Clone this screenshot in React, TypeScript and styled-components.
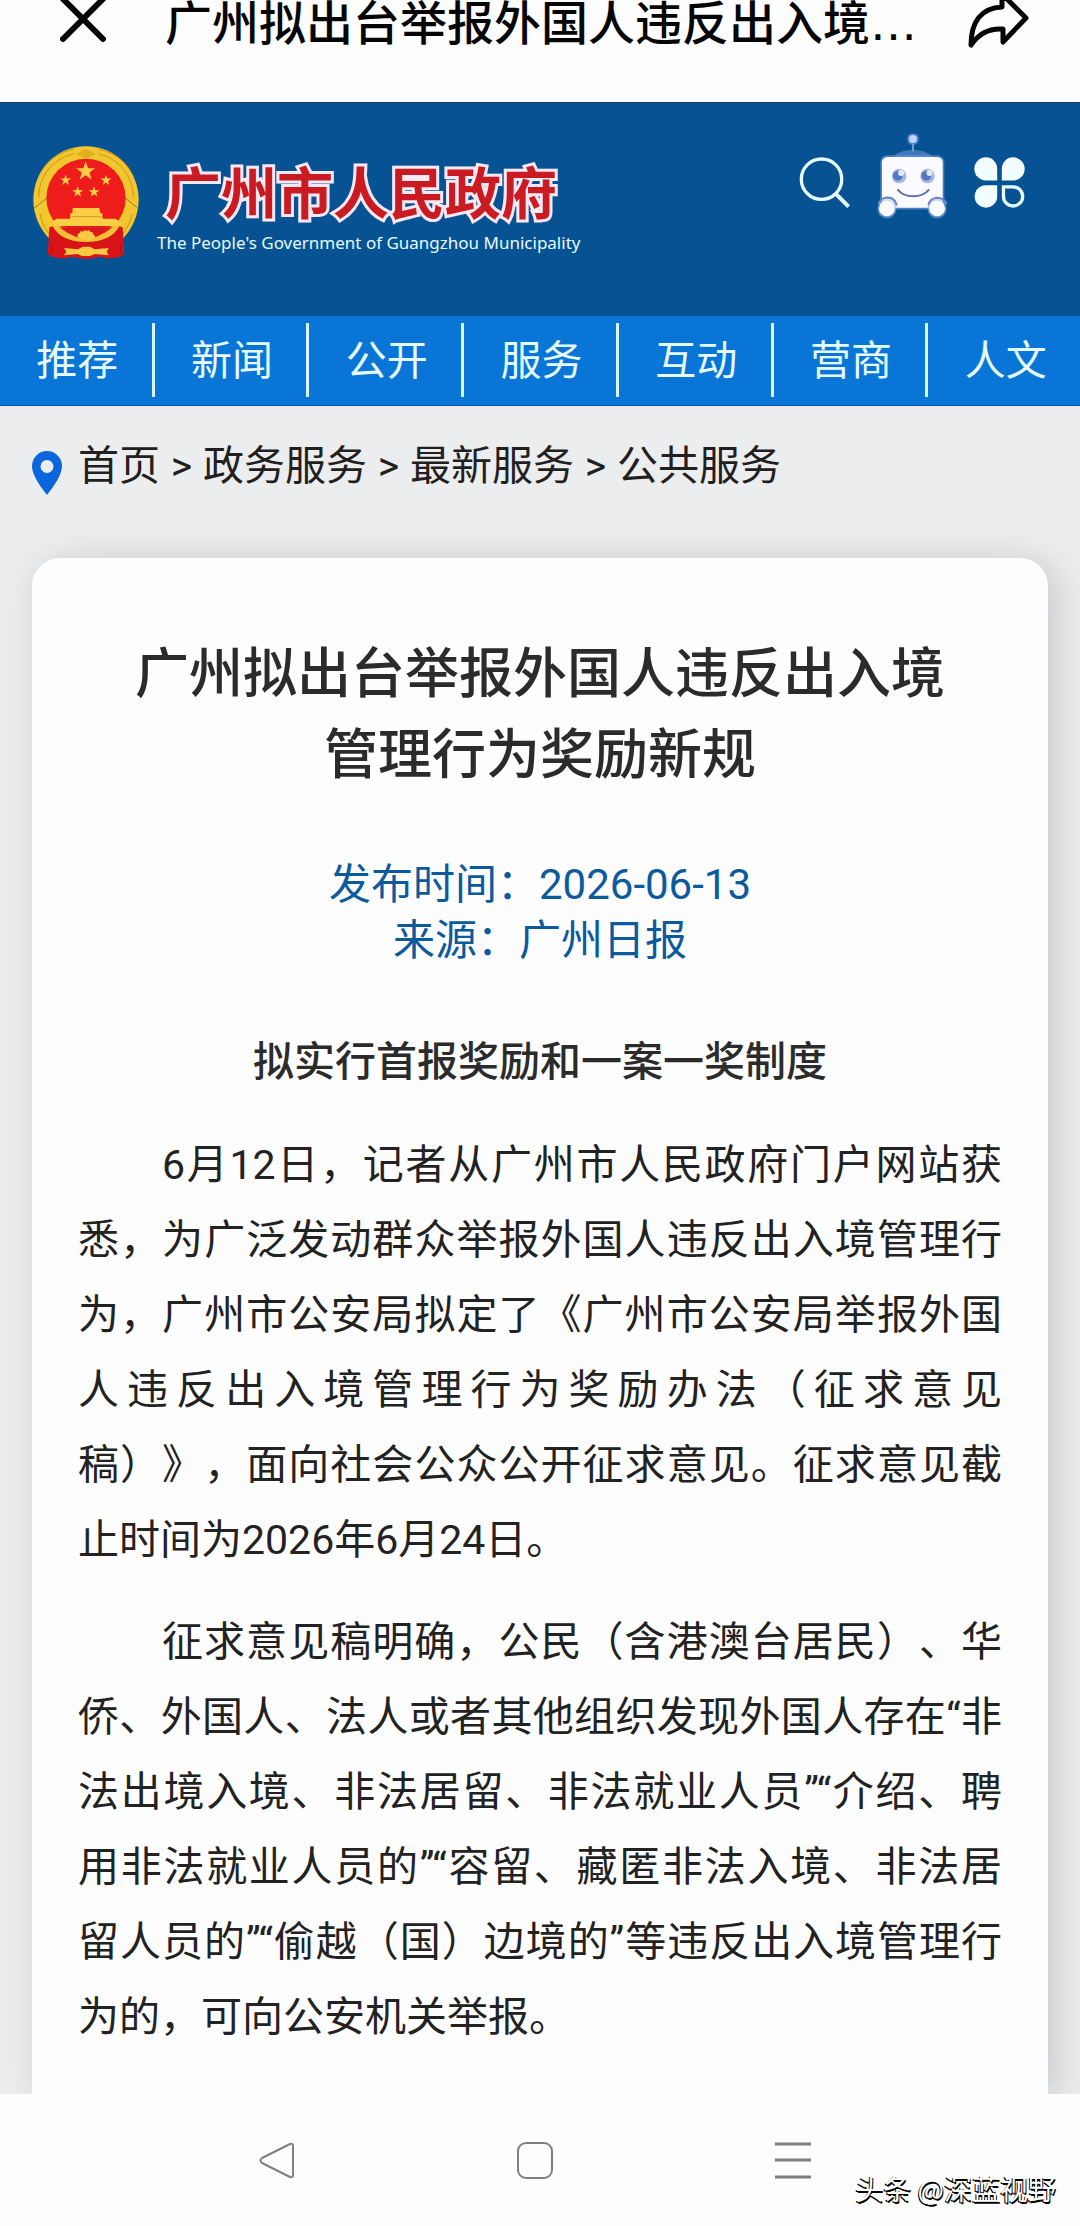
import styled, { createGlobalStyle } from 'styled-components';

const GlobalStyle = createGlobalStyle`
  * {
    box-sizing: border-box;
  }

  body {
    margin: 0;
    background: #fdfdfd;
    font-family: Roboto, 'Noto Sans CJK SC', sans-serif;
    text-spacing-trim: space-all;
  }

  h1,
  h2,
  p {
    margin: 0;
  }

  a {
    color: inherit;
    text-decoration: none;
  }

  svg {
    display: block;
  }
`;

const Page = styled.div`
  display: flex;
  flex-direction: column;
  min-height: 100vh;
`;

const IconButton = styled.button`
  flex: none;
  padding: 0;
  border: 0;
  background: none;
`;

const TopBar = styled.div`
  display: flex;
  align-items: flex-start;
  padding: 0 51px 54px 60px;
`;

const TopTitle = styled.div`
  flex: 1;
  margin-left: 58px;
  color: #060606;
  font-size: 47px;
  font-weight: 500;
  line-height: 48px;
  white-space: nowrap;
`;

const Ellipsis = styled.span`
  font-family: 'DejaVu Sans', sans-serif;
  font-weight: 400;
`;

const SiteHeader = styled.header`
  display: flex;
  align-items: flex-start;
  justify-content: space-between;
  height: 214px;
  padding: 0 55px 0 33px;
  border-top: 1px solid #0b3d66;
  background: #075293;
`;

const Brand = styled.a`
  display: flex;
  gap: 18px;
  padding-top: 43px;
`;

const BrandText = styled.span`
  display: flex;
  flex-direction: column;
  padding-top: 19px;
`;

const BrandName = styled.span`
  padding-left: 8px;
  color: #cb1b22;
  font-size: 56px;
  font-weight: 700;
  line-height: 60px;
  -webkit-text-stroke: 6px #f6e9f4;
  paint-order: stroke fill;
`;

const BrandEnglish = styled.span`
  color: #e4fbff;
  font-family: 'Noto Sans', sans-serif;
  font-size: 17px;
  line-height: 36px;
`;

const HeaderTools = styled.div`
  display: flex;
  align-items: center;
  gap: 27px;
  padding-top: 29px;
`;

const NavBar = styled.nav`
  display: flex;
  padding: 7px 0 8px;
  border-bottom: 1px solid #0a559f;
  background: #0976d7;
`;

const NavLink = styled.a`
  flex: 1;
  padding: 2px 0 0 3px;
  border-right: 3px solid #d8f7ff;
  color: #e6fcff;
  font-size: 41px;
  line-height: 72px;
  text-align: center;

  &:last-child {
    border-right: 0;
  }
`;

const Content = styled.main`
  display: flex;
  flex: 1;
  flex-direction: column;
  padding: 0 32px;
  overflow: hidden;
  background: #ebedee;
`;

const Breadcrumb = styled.nav`
  display: flex;
  align-items: center;
  gap: 16px;
  padding: 29px 0 61px;
  color: #231f20;
  font-size: 41px;
  line-height: 62px;
`;

const Separator = styled.span`
  display: inline-block;
  width: 43px;
  text-align: center;
`;

const PinIcon = styled.svg`
  flex: none;
  margin-top: 14px;
`;

const Card = styled.article`
  flex: 1;
  padding: 76px 46px 38px;
  border-radius: 28px 28px 0 0;
  background: #fdfdfd;
  box-shadow: 8px 4px 36px rgba(0, 0, 0, 0.16);
`;

const Headline = styled.h1`
  color: #2b2b2b;
  font-size: 54px;
  font-weight: 500;
  line-height: 81px;
  text-align: center;
`;

const Meta = styled.p`
  color: #0b5a9e;
  font-size: 42px;
  line-height: 56px;
  text-align: center;
`;

const MetaGroup = styled.div`
  padding: 61px 0 55px;
`;

const Subtitle = styled.h2`
  margin-bottom: 28px;
  color: #2b2b2b;
  font-size: 41px;
  font-weight: 500;
  line-height: 76px;
  text-align: center;
`;

const Paragraph = styled.p`
  color: #222;
  font-size: 41px;
  line-height: 75px;
  text-align: justify;
  text-indent: 84px;

  & + & {
    margin-top: 27px;
  }
`;

const SystemBar = styled.footer`
  position: relative;
  display: flex;
  justify-content: center;
  gap: 222px;
  padding: 48px 10px 47px 0;
  background: #fdfdfd;
`;

const Watermark = styled.span`
  position: absolute;
  right: 24px;
  bottom: 18px;
  color: #fff;
  font-family: 'Noto Sans CJK SC', sans-serif;
  font-size: 28px;
  line-height: 40px;
  text-shadow: -1px 1px 0 #000, 1px 2px 0 #000;
`;

const navItems = ['推荐', '新闻', '公开', '服务', '互动', '营商', '人文'];

const crumbs = ['首页', '政务服务', '最新服务', '公共服务'];

const paragraphs = [
  '6月12日，记者从广州市人民政府门户网站获悉，为广泛发动群众举报外国人违反出入境管理行为，广州市公安局拟定了《广州市公安局举报外国人违反出入境管理行为奖励办法（征求意见稿）》，面向社会公众公开征求意见。征求意见截止时间为2026年6月24日。',
  '征求意见稿明确，公民（含港澳台居民）、华侨、外国人、法人或者其他组织发现外国人存在“非法出境入境、非法居留、非法就业人员”“介绍、聘用非法就业人员的”“容留、藏匿非法入境、非法居留人员的”“偷越（国）边境的”等违反出入境管理行为的，可向公安机关举报。',
];

const STAR = '0,-10 2.4,-3.2 9.5,-3.1 3.8,1.2 5.9,8.1 0,4 -5.9,8.1 -3.8,1.2 -9.5,-3.1 -2.4,-3.2';

const Emblem = () => (
  <svg width="106" height="114" viewBox="39 46 318 342" aria-hidden="true">
    <path
      d="M198 47C105 47 40 122 40 208c0 45 20 88 48 116l20 14h180l20-14c28-28 48-71 48-116C356 122 291 47 198 47Z"
      fill="#f2c62f"
    />
    <path
      d="M62 126C80 92 116 64 160 56M56 200C56 140 96 84 160 70M334 126C316 92 280 64 236 56M340 200C340 140 300 84 236 70M60 250c4 24 14 42 28 60M336 250c-4 24-14 42-28 60"
      fill="none"
      stroke="#c9941c"
      strokeWidth="3"
    />
    <path d="M44 232l36-30M352 232l-36-30" stroke="#8f7d2a" strokeWidth="3" />
    <path d="M168 70l30-16 30 16-30 14z" fill="#e2ae22" />
    <ellipse cx="198" cy="202" rx="119" ry="118" fill="#ee1c1b" />
    <g fill="#fbcf45">
      <polygon points={STAR} transform="translate(197 122) scale(3)" />
      <polygon points={STAR} transform="translate(137 149) scale(1.7)" />
      <polygon points={STAR} transform="translate(258 149) scale(1.7)" />
      <polygon points={STAR} transform="translate(173 184) scale(1.7)" />
      <polygon points={STAR} transform="translate(222 184) scale(1.7)" />
      <path d="M158 232h80l3 16h6l1 16h38l12 8v14H98v-14l12-8h40l1-16h6z" />
    </g>
    <path d="M152 258h94" stroke="#d79a24" strokeWidth="3" />
    <path
      d="M88 290l14-4c16 26 52 44 96 44s80-18 96-44l14 4 5 80c-16 14-50 16-72 8l-43 8-43-8c-24 8-54 6-72-8z"
      fill="#d91419"
    />
    <path
      d="M98 286c14 30 50 48 100 48s86-18 100-48l-16-2c-8 4-20 7-30 8-14 18-32 28-54 28s-40-10-54-28c-10-1-22-4-30-8z"
      fill="#f4bf35"
    />
    <path d="M118 290h160l-24 16-28 14h-56l-28-14z" fill="#dc181b" />
    <path
      d="M172 318c0-7 4-12 8-12l2-6 7 3 6-6 5 4 7-3 4 6 7 1 2 7c4 2 6 4 6 8l-27 12z"
      fill="#fbc843"
    />
    <path
      d="M132 352l42 4 14-8h22l14 8 42-4-6 11 6 11-42-4-14 6h-24l-14-6-40 4 7-11z"
      fill="#fbc843"
    />
    <path d="M90 340c8 18 6 28 0 32M306 340c-8 18-6 28 0 32" stroke="#a80f18" strokeWidth="3" fill="none" />
  </svg>
);

const SearchIcon = () => (
  <svg width="51" height="51" viewBox="118 168 154 154" fill="none" stroke="#e6fbff">
    <circle cx="186" cy="235" r="61" strokeWidth="10" />
    <path d="M229 279l39 39" strokeWidth="12" />
  </svg>
);

const RobotIcon = () => (
  <svg width="70" height="100" viewBox="350 95 212 300">
    <path d="M400 168c14-14 34-20 58-20s46 6 60 20z" fill="#3f78bd" />
    <path d="M459 130v22" stroke="#6f9be0" strokeWidth="6" />
    <circle cx="459" cy="115" r="18" fill="#7fa4ea" opacity="0.6" />
    <circle cx="459" cy="115" r="12" fill="#c3d3ff" />
    <rect x="360" y="164" width="194" height="164" rx="20" fill="#7ea3e2" opacity="0.55" />
    <rect x="365" y="169" width="184" height="154" rx="16" fill="#fbfbff" />
    <circle cx="417" cy="227" r="22" fill="#a4b8e8" />
    <circle cx="503" cy="227" r="22" fill="#a4b8e8" />
    <circle cx="413" cy="226" r="15" fill="#5877bd" />
    <circle cx="499" cy="226" r="15" fill="#5877bd" />
    <circle cx="423" cy="218" r="9" fill="#e3ecff" />
    <circle cx="509" cy="218" r="9" fill="#e3ecff" />
    <path d="M412 267c22 28 74 28 96 0" fill="none" stroke="#5b6fb0" strokeWidth="6" />
    <path d="M356 312c6-26 46-28 54 4M506 316c4-30 46-30 54-4" fill="none" stroke="#6f86c4" strokeWidth="7" />
    <circle cx="380" cy="326" r="29" fill="#8fb0ec" opacity="0.6" />
    <circle cx="532" cy="326" r="29" fill="#8fb0ec" opacity="0.6" />
    <circle cx="380" cy="325" r="24" fill="#fbfbff" />
    <circle cx="532" cy="325" r="24" fill="#fbfbff" />
  </svg>
);

const MenuIcon = () => (
  <svg width="51" height="51" viewBox="640 167 154 154" fill="#f2fdff">
    <path d="M676 168a34 34 0 0 1 34 34v36h-34a35 35 0 0 1 0-70z" />
    <path d="M758 168a34 34 0 0 0-34 34v36h34a35 35 0 0 0 0-70z" />
    <path d="M676 320a34 34 0 0 0 34-34v-34h-34a34 34 0 0 0 0 68z" />
    <path
      d="M758 315a29 29 0 0 1-29-29v-29h29a29 29 0 0 1 0 58z"
      fill="none"
      stroke="#e8fbff"
      strokeWidth="10"
    />
  </svg>
);

const App = (): JSX.Element => {
  return (
    <Page>
      <GlobalStyle />
      <TopBar>
        <IconButton type="button" aria-label="关闭">
          <svg width="47" height="48" viewBox="0 0 47 48" fill="none" stroke="#060606" strokeWidth="6" strokeLinecap="round">
            <path d="M3 -1L43 39M43 -1L3 39" />
          </svg>
        </IconButton>
        <TopTitle>
          广州拟出台举报外国人违反出入境<Ellipsis>…</Ellipsis>
        </TopTitle>
        <IconButton type="button" aria-label="分享">
          <svg width="62" height="48" viewBox="0 0 62 48" fill="none" stroke="#060606" strokeWidth="5" strokeLinejoin="round">
            <path d="M35 -6L59 18L36 42V29C22 28 12 33 4 45C4 22 14 8 35 7Z" />
          </svg>
        </IconButton>
      </TopBar>

      <SiteHeader>
        <Brand href="#">
          <Emblem />
          <BrandText>
            <BrandName>广州市人民政府</BrandName>
            <BrandEnglish>The People's Government of Guangzhou Municipality</BrandEnglish>
          </BrandText>
        </Brand>
        <HeaderTools>
          <IconButton type="button" aria-label="搜索">
            <SearchIcon />
          </IconButton>
          <IconButton type="button" aria-label="智能问答">
            <RobotIcon />
          </IconButton>
          <IconButton type="button" aria-label="菜单">
            <MenuIcon />
          </IconButton>
        </HeaderTools>
      </SiteHeader>

      <NavBar>
        {navItems.map((item) => (
          <NavLink key={item} href="#">
            {item}
          </NavLink>
        ))}
      </NavBar>

      <Content>
        <Breadcrumb>
          <PinIcon width="30" height="44" viewBox="0 0 30 44">
            <path
              d="M15 0a15 15 0 0 1 15 15c0 9-8 20-15 29C8 35 0 24 0 15A15 15 0 0 1 15 0zm0 9a6 6 0 1 0 0 13 6 6 0 0 0 0-13z"
              fill="#0b66dc"
              fillRule="evenodd"
            />
          </PinIcon>
          <span>
            {crumbs.map((crumb, index) => (
              <span key={crumb}>
                {index > 0 && <Separator>&gt;</Separator>}
                <a href="#">{crumb}</a>
              </span>
            ))}
          </span>
        </Breadcrumb>

        <Card>
          <Headline>
            广州拟出台举报外国人违反出入境
            <br />
            管理行为奖励新规
          </Headline>
          <MetaGroup>
            <Meta>发布时间：2026-06-13</Meta>
            <Meta>来源：广州日报</Meta>
          </MetaGroup>
          <Subtitle>拟实行首报奖励和一案一奖制度</Subtitle>
          {paragraphs.map((text) => (
            <Paragraph key={text}>{text}</Paragraph>
          ))}
        </Card>
      </Content>

      <SystemBar>
        <IconButton type="button" aria-label="返回">
          <svg width="36" height="37" viewBox="0 0 36 37" fill="none" stroke="#808080" strokeWidth="2" strokeLinejoin="round">
            <path d="M31 2Q34 1 34 4V33Q34 36 31 35L3 21Q0 18 3 16Z" />
          </svg>
        </IconButton>
        <IconButton type="button" aria-label="主页">
          <svg width="36" height="37" viewBox="0 0 36 37" fill="none" stroke="#808080" strokeWidth="2">
            <rect x="1" y="1" width="34" height="35" rx="8" />
          </svg>
        </IconButton>
        <IconButton type="button" aria-label="最近任务">
          <svg width="36" height="37" viewBox="0 0 36 37" stroke="#808080" strokeWidth="3">
            <path d="M0 2H36M0 18H36M0 35H36" />
          </svg>
        </IconButton>
        <Watermark>头条 @深蓝视野</Watermark>
      </SystemBar>
    </Page>
  );
};

export default App;
